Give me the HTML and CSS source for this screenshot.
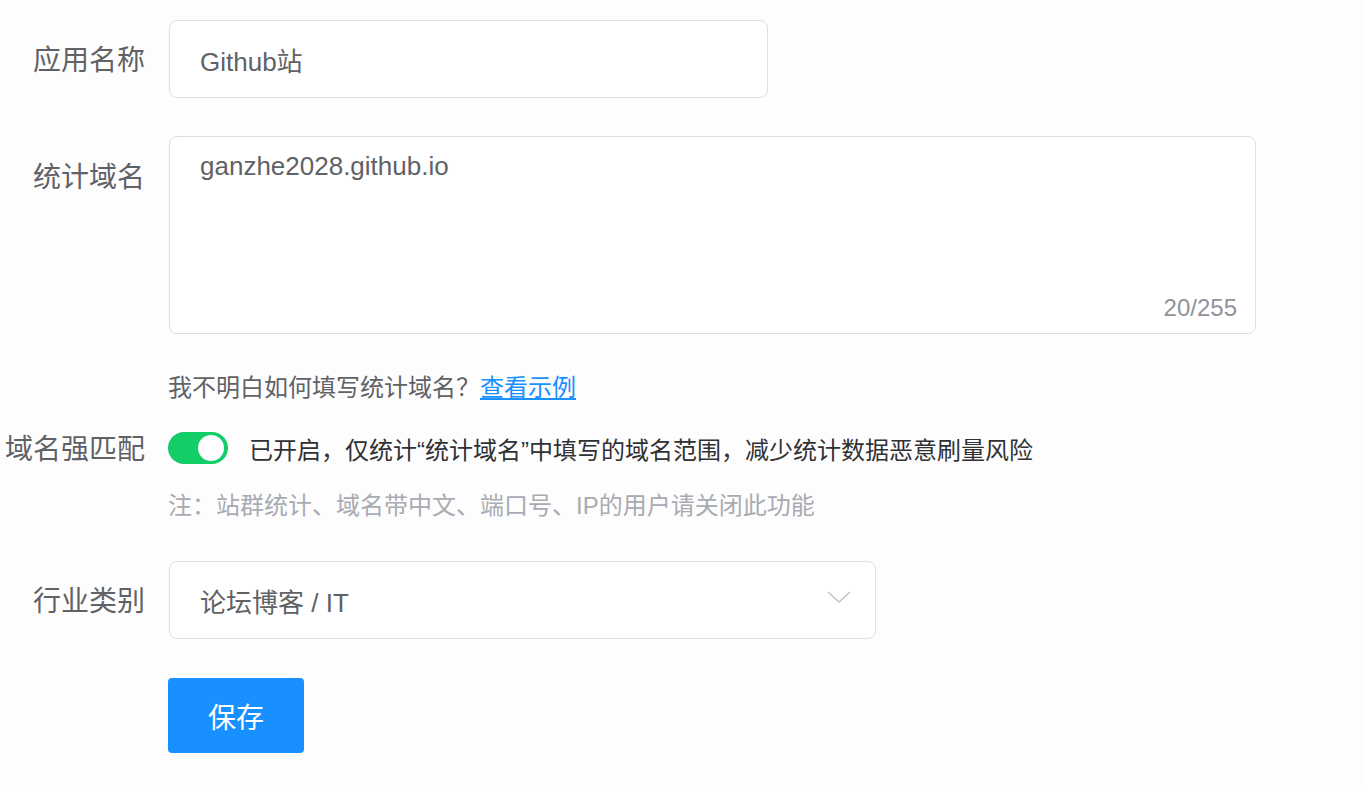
FILE: index.html
```html
<!DOCTYPE html>
<html lang="zh-CN">
<head>
  <meta charset="UTF-8" />
  <title>应用设置</title>
  <link rel="stylesheet" href="styles.css">
</head>
<body>

<form class="form">
  <div class="form-item item-name">
    <label class="form-label">应用名称</label>
    <div class="form-field">
      <input class="input input-name" type="text" value="Github站">
    </div>
  </div>

  <div class="form-item item-domain">
    <label class="form-label">统计域名</label>
    <div class="form-field">
      <div class="textarea-wrap">
        <textarea class="textarea">ganzhe2028.github.io</textarea>
        <span class="counter">20/255</span>
      </div>
      <div class="hint">我不明白如何填写统计域名？<a href="#" class="link">查看示例</a></div>
    </div>
  </div>

  <div class="form-item item-match">
    <label class="form-label">域名强匹配</label>
    <div class="form-field">
      <div class="switch-row">
        <span class="switch is-on"></span>
        <span class="switch-text">已开启，仅统计“统计域名”中填写的域名范围，减少统计数据恶意刷量风险</span>
      </div>
      <div class="note">注：站群统计、域名带中文、端口号、IP的用户请关闭此功能</div>
    </div>
  </div>

  <div class="form-item item-type">
    <label class="form-label">行业类别</label>
    <div class="form-field">
      <div class="select">
        <span class="select-value">论坛博客 / IT</span>
        <svg class="select-arrow" width="24" height="14" viewBox="0 0 24 14">
          <path d="M1 2 L12 12 L23 2" fill="none" stroke="#c0c4cc" stroke-width="1.5"/>
        </svg>
      </div>
    </div>
  </div>

  <div class="form-item item-save">
    <div class="form-label"></div>
    <div class="form-field">
      <button type="button" class="btn-primary">保存</button>
    </div>
  </div>
</form>

</body>
</html>
```

FILE: styles.css
```css
body {
  margin: 0;
  background: #fefdfe;
  font-family: "Liberation Sans", "Noto Sans CJK SC", sans-serif;
  color: #606266;
}
.form { padding-top: 20px; }
.form-item { display: flex; align-items: flex-start; }
.form-label {
  width: 145px;
  padding-right: 24px;
  padding-top: 3px;
  flex: none;
  text-align: right;
  font-size: 28px;
  line-height: 75px;
  color: #606266;
  white-space: nowrap;
}
.form-field { flex: none; }

.input {
  display: block;
  width: 599px;
  height: 78px;
  box-sizing: border-box;
  border: 1px solid #dcdfe6;
  border-radius: 8px;
  background: #fff;
  padding: 0 30px;
  font-family: inherit;
  font-size: 26px;
  color: #606266;
  outline: none;
}

.item-domain { margin-top: 38px; }
.item-domain .form-label { line-height: 77px; }
.textarea-wrap { position: relative; width: 1087px; }
.textarea {
  display: block;
  width: 100%;
  height: 198px;
  box-sizing: border-box;
  border: 1px solid #dcdfe6;
  border-radius: 8px;
  background: #fff;
  padding: 10px 30px;
  font-family: inherit;
  font-size: 26px;
  line-height: 39px;
  color: #606266;
  resize: none;
  outline: none;
}
.counter {
  position: absolute;
  right: 19px;
  bottom: 14px;
  font-size: 24px;
  line-height: 24px;
  color: #909399;
}
.hint {
  margin-top: 36px;
  margin-left: -1px;
  font-size: 24px;
  line-height: 36px;
  color: #606266;
}
.link { color: #1890ff; text-decoration: underline; }

.item-match { margin-top: 2px; }
.item-match .form-label { line-height: 77px; }
.switch-row {
  display: flex;
  align-items: center;
  height: 80px;
  gap: 21px;
  margin-left: -1px;
}
.switch {
  position: relative;
  width: 60px;
  height: 32px;
  border-radius: 16px;
  background: #13ce66;
  flex: none;
}
.switch::after {
  content: "";
  position: absolute;
  top: 3px;
  right: 4px;
  width: 26px;
  height: 26px;
  border-radius: 50%;
  background: #fff;
}
.switch-text { font-size: 24px; color: #303133; }
.note {
  margin-left: -1px;
  font-size: 24px;
  line-height: 36px;
  color: #a8abb2;
}

.item-type { margin-top: 37px; }
.select {
  width: 707px;
  height: 78px;
  box-sizing: border-box;
  border: 1px solid #e4dce6;
  border-radius: 8px;
  background: #fff;
  padding: 0 24px 0 30px;
  display: flex;
  align-items: center;
  justify-content: space-between;
}
.select-value { font-size: 26px; color: #606266; }
.select-arrow { margin-top: -6px; }

.item-save { margin-top: 39px; }
.item-save .form-label { line-height: 1; }
.btn-primary {
  width: 136px;
  height: 75px;
  margin-left: -1px;
  border: none;
  border-radius: 4px;
  background: #1890ff;
  color: #fff;
  font-family: inherit;
  font-size: 28px;
  cursor: pointer;
}
```
